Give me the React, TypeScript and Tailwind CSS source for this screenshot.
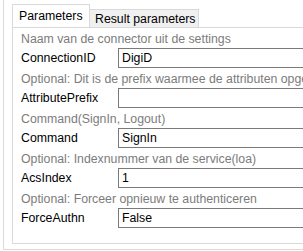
const rows = [
  { hint: 'Naam van de connector uit de settings', label: 'ConnectionID', value: 'DigiD' },
  { hint: 'Optional: Dit is de prefix waarmee de attributen opgeslagen worden', label: 'AttributePrefix', value: '' },
  { hint: 'Command(SignIn, Logout)', label: 'Command', value: 'SignIn' },
  { hint: 'Optional: Indexnummer van de service(loa)', label: 'AcsIndex', value: '1' },
  { hint: 'Optional: Forceer opnieuw te authenticeren', label: 'ForceAuthn', value: 'False' },
];

export default function App() {
  return (
    <div className="w-[303px] h-[251px] bg-white overflow-hidden font-['Liberation_Sans',Arial,sans-serif] text-[12.3px] leading-[14px] text-black">
      <div className="ml-[3px] h-[250px] w-[400px] border-l border-b border-[#dadada] pl-[8px] pt-[5px]">
        <div className="flex items-end h-[22px]">
          <div className="relative z-10 w-[78px] h-[23px] border border-b-0 border-[#d9d9d9] bg-white pl-[6px] pt-[4px]">
            Parameters
          </div>
          <div className="w-[109px] h-[18px] border border-l-0 border-b-0 border-[#d9d9d9] bg-[#f0f0f0] pl-[5px] pt-[2px]">
            Result parameters
          </div>
        </div>
        <div className="h-[217px] w-[380px] border border-[#d9d9d9] pl-[8px] pt-[4px]">
          {rows.map(row => (
            <div key={row.label} className="h-[40px]">
              <div className="whitespace-nowrap text-[#7c7c7c] h-[14px]">{row.hint}</div>
              <div className="flex items-center mt-[2px] h-[20px]">
                <div className="w-[97px] shrink-0">{row.label}</div>
                <div className="h-[20px] flex-1 border border-[#7a7a7a] bg-white pl-[3px] flex items-center">
                  {row.value}
                </div>
              </div>
            </div>
          ))}
        </div>
      </div>
    </div>
  );
}
